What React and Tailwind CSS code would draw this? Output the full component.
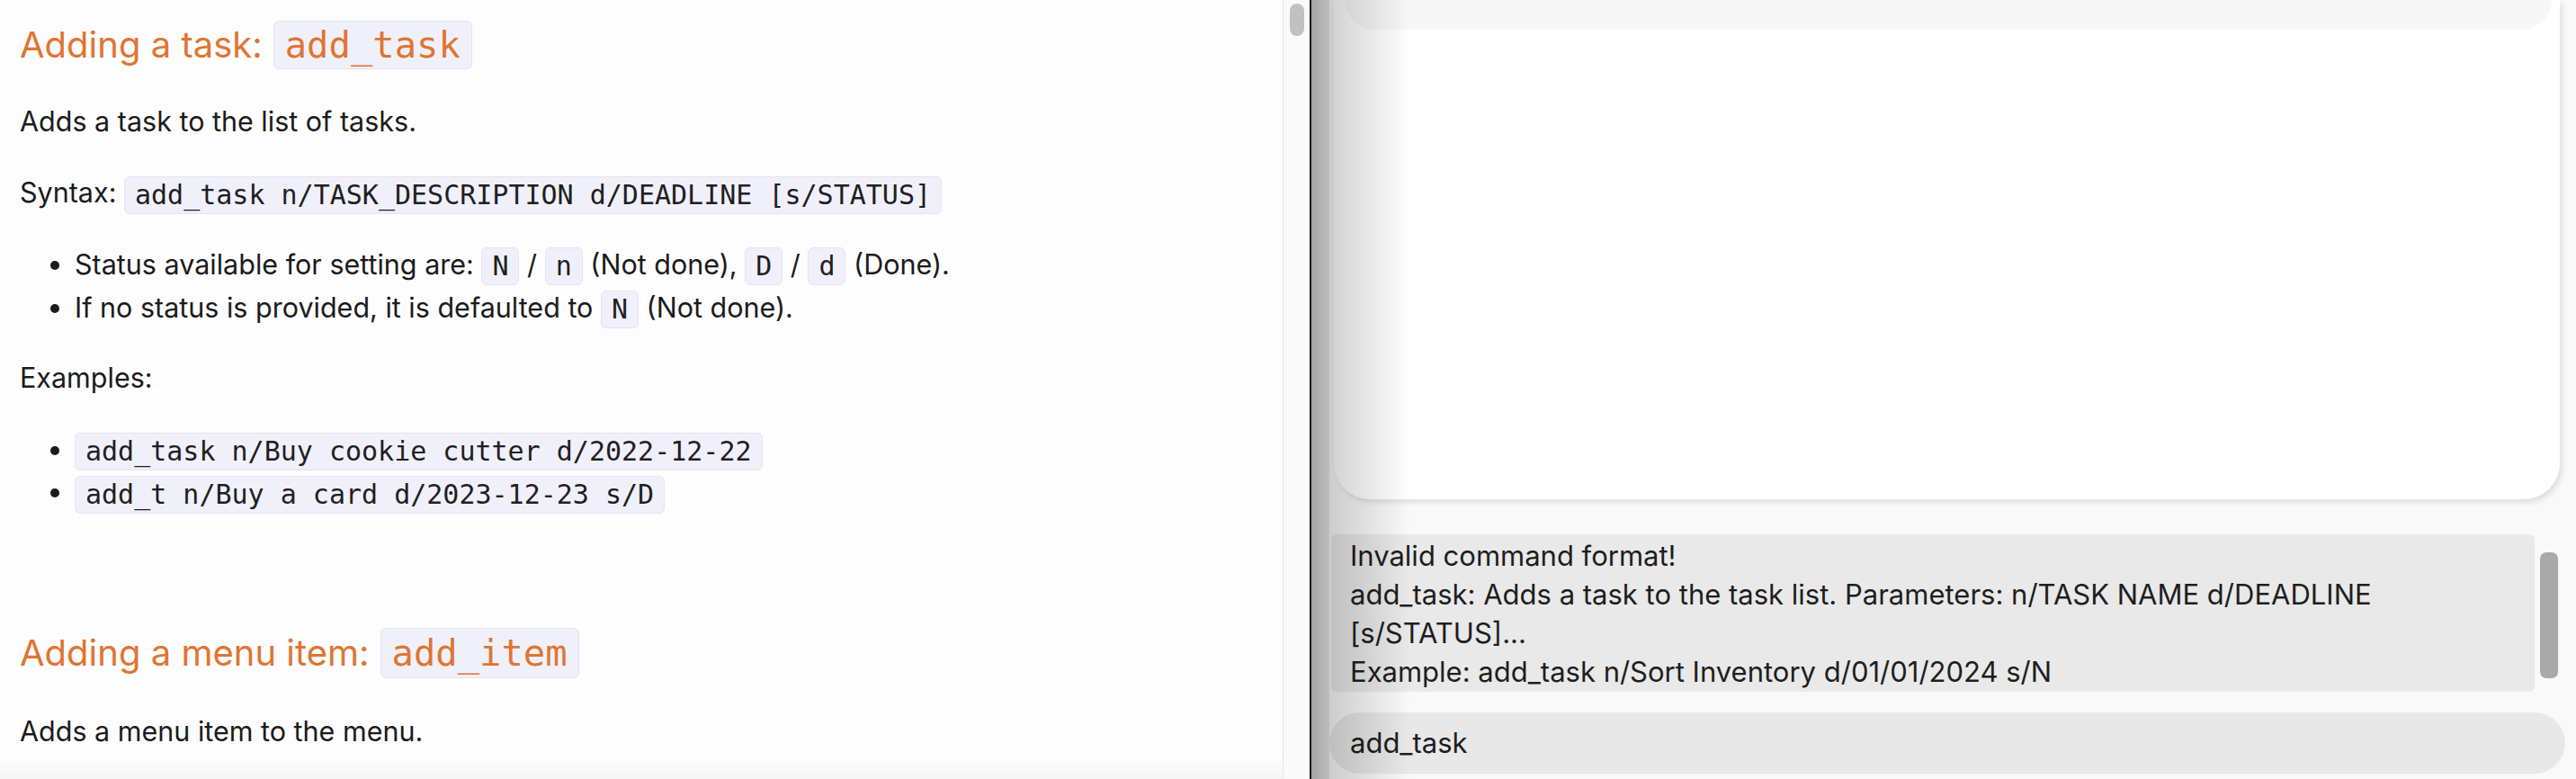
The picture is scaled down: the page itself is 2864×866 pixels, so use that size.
export default function App() {
  const code =
    "inline-block [font-family:'DejaVu_Sans_Mono',monospace] text-[30px] leading-[40px] px-[11px] rounded-[6px] border border-[#e4e4f0] bg-[#f0f0fb] text-[#1f1f1f] align-middle";
  return (
    <div className="w-[2864px] h-[866px] flex overflow-hidden [font-family:Inter,sans-serif]">
      {/* Left documentation page */}
      <div className="relative w-[1456px] h-full flex bg-[#fdfdfd]">
        <div className="flex-1 pl-[22px] text-[30.5px] text-[#1b1b1b]">
          <div className="mt-[23px] h-[54px] flex items-center gap-[12px] text-[40px] text-[#df7532]">
            <span>Adding a task:</span>
            <span className="[font-family:'DejaVu_Sans_Mono',monospace] text-[40.5px] leading-[52px] px-[12px] rounded-[6px] border border-[#e4e4f0] bg-[#f0f0fb]">
              add_task
            </span>
          </div>
          <p className="mt-[36px] leading-[44px]">Adds a task to the list of tasks.</p>
          <p className="mt-[35px] leading-[44px]">
            Syntax: <span className={code}>add_task n/TASK_DESCRIPTION d/DEADLINE [s/STATUS]</span>
          </p>
          <ul className="mt-[32px] pl-[61px] list-disc marker:text-[#1b1b1b]">
            <li className="leading-[48px]">
              Status available for setting are: <span className={code}>N</span> /{" "}
              <span className={code}>n</span> (Not done), <span className={code}>D</span> /{" "}
              <span className={code}>d</span> (Done).
            </li>
            <li className="leading-[48px]">
              If no status is provided, it is defaulted to <span className={code}>N</span> (Not done).
            </li>
          </ul>
          <p className="mt-[32px] leading-[44px]">Examples:</p>
          <ul className="mt-[34px] pl-[61px] list-disc">
            <li className="leading-[47px]">
              <span className={code}>add_task n/Buy cookie cutter d/2022-12-22</span>
            </li>
            <li className="leading-[47px]">
              <span className={code}>add_t n/Buy a card d/2023-12-23 s/D</span>
            </li>
          </ul>
          <div className="mt-[127px] h-[56px] flex items-center gap-[12px] text-[40px] text-[#df7532]">
            <span>Adding a menu item:</span>
            <span className="[font-family:'DejaVu_Sans_Mono',monospace] text-[40.5px] leading-[54px] px-[12px] rounded-[6px] border border-[#e4e4f0] bg-[#f0f0fb]">
              add_item
            </span>
          </div>
          <p className="mt-[37px] leading-[44px]">Adds a menu item to the menu.</p>
        </div>
        {/* scrollbar track */}
        <div className="w-[30px] h-full border-l border-[#e6e6e6] bg-[#fafafa] pt-[4px] pl-[7px]">
          <div className="w-[16px] h-[36px] rounded-full bg-[#c1c1c1]"></div>
        </div>
        <div className="pointer-events-none absolute left-0 right-[30px] bottom-0 h-[24px] bg-[linear-gradient(to_bottom,rgba(0,0,0,0),rgba(0,0,0,0.03))]"></div>
      </div>

      {/* Right application window */}
      <div className="relative flex-1 h-full flex flex-col bg-[#f9f9f9] border-l-2 border-[#1a1a1a] text-[31px] text-[#1e1e1e]">
        <div className="ml-[25px] mr-[18px] h-[555px] shrink-0 bg-white rounded-b-[40px] shadow-[3px_4px_6px_rgba(0,0,0,0.10)]">
          <div className="ml-[12px] mr-[9px] h-[33px] bg-[#f7f7f7] rounded-b-[50px]"></div>
        </div>
        <div className="mt-[39px] ml-[22px] mr-[20px] flex gap-[6px]">
          <div className="flex-1 h-[175px] bg-[#e9e9e9] rounded-[6px] pl-[21px] pt-[2px] leading-[43px] whitespace-pre-line">
            {"Invalid command format!\nadd_task: Adds a task to the task list. Parameters: n/TASK NAME d/DEADLINE\n[s/STATUS]...\nExample: add_task n/Sort Inventory d/01/01/2024 s/N"}
          </div>
          <div className="w-[20px] mt-[20px] h-[140px] rounded-[7px] bg-[#a9a9a9]"></div>
        </div>
        <div className="mt-[23px] ml-[20px] mr-[12px] h-[68px] rounded-full bg-[#e8e8e8] pl-[23px] flex items-center">
          add_task
        </div>
        {/* left edge shading */}
        <div className="pointer-events-none absolute left-0 top-0 bottom-0 w-[20px] bg-[linear-gradient(to_right,#a4a4a4,#bdbdbd)]"></div>
        <div className="pointer-events-none absolute left-[20px] top-0 bottom-0 w-[90px] bg-[linear-gradient(to_right,rgba(0,0,0,0.18),rgba(0,0,0,0))]"></div>
      </div>
    </div>
  );
}
